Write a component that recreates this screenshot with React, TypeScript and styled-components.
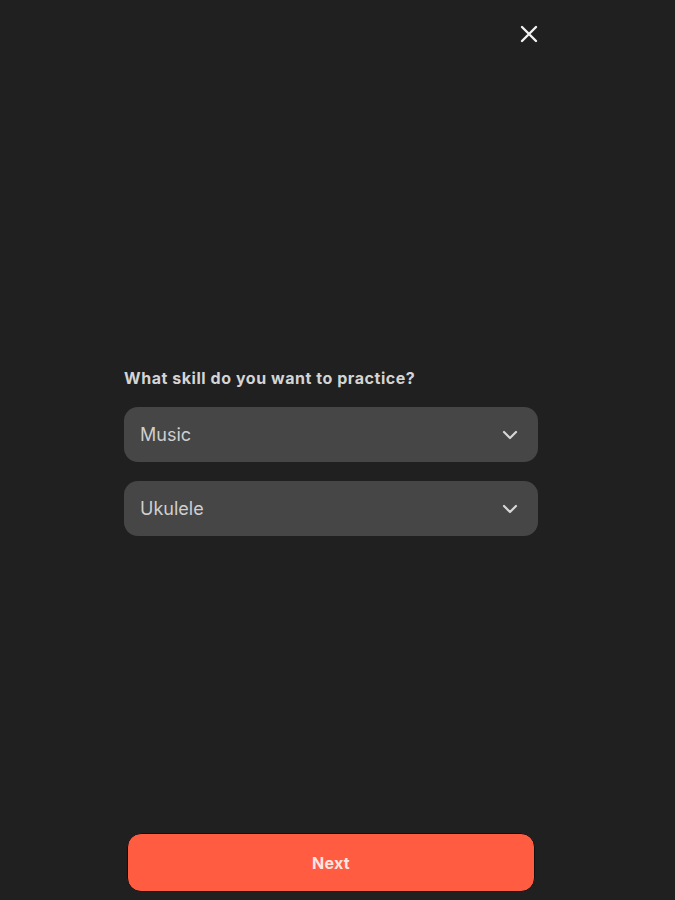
import React from 'react';
import styled, { createGlobalStyle } from 'styled-components';

const GlobalStyle = createGlobalStyle`
    html, body {
        margin: 0;
        padding: 0;
        background: #202020;
    }
    body {
        font-family: Inter, "Noto Sans", sans-serif;
        -webkit-font-smoothing: antialiased;
    }
`;

const Page = styled.div`
    height: 900px;
    width: 675px;
    display: flex;
    flex-direction: column;
    background: #202020;
    box-sizing: border-box;
`;

const Header = styled.div`
    display: flex;
    justify-content: flex-end;
    padding: 25px 137px 0 0;
    height: 68px;
    box-sizing: border-box;
`;

const CloseButton = styled.button`
    width: 18px;
    height: 18px;
    padding: 0;
    border: none;
    background: none;
    color: #f2f2f2;
    cursor: pointer;
    display: flex;
    align-items: center;
    justify-content: center;
`;

const Main = styled.main`
    flex: 1;
    display: flex;
    flex-direction: column;
    padding: 300px 0 0 124px;
    width: 414px;
`;

const Question = styled.label`
    font-size: 16px;
    font-weight: 700;
    color: #d4d4d4;
    line-height: 20px;
    margin-bottom: 19px;
    letter-spacing: 0.55px;
`;

const SelectList = styled.div`
    display: flex;
    flex-direction: column;
    gap: 19px;
`;

const Select = styled.div`
    height: 55px;
    border-radius: 14px;
    background: #464646;
    display: flex;
    align-items: center;
    justify-content: space-between;
    padding: 0 20px 0 16px;
    box-sizing: border-box;
    cursor: pointer;
`;

const SelectValue = styled.span`
    font-size: 18px;
    color: #cfcfcf;
`;

const Footer = styled.div`
    display: flex;
    padding: 0 0 8px 127px;
`;

const NextButton = styled.button`
    width: 408px;
    height: 59px;
    border-radius: 14px;
    border: 1px solid #111;
    background: #ff5c41;
    color: #fde6e0;
    font-family: Inter, "Noto Sans", sans-serif;
    font-size: 16px;
    font-weight: 700;
    letter-spacing: 0.3px;
    cursor: pointer;
`;

const Chevron = () => (
    <svg width="16" height="10" viewBox="0 0 16 10" fill="none">
        <path d="M2 2L8 8L14 2" stroke="#d6d6d6" strokeWidth="2.2" strokeLinecap="round" strokeLinejoin="round" />
    </svg>
);

const CloseIcon = () => (
    <svg width="18" height="18" viewBox="0 0 18 18" fill="none">
        <path d="M2 2L16 16M16 2L2 16" stroke="currentColor" strokeWidth="2.4" strokeLinecap="round" />
    </svg>
);

const options = ['Music', 'Ukulele'];

export default function App(): React.ReactElement {
    return (
        <>
            <GlobalStyle />
            <Page>
                <Header>
                    <CloseButton aria-label="Close">
                        <CloseIcon />
                    </CloseButton>
                </Header>
                <Main>
                    <Question>What skill do you want to practice?</Question>
                    <SelectList>
                        {options.map((value) => (
                            <Select key={value}>
                                <SelectValue>{value}</SelectValue>
                                <Chevron />
                            </Select>
                        ))}
                    </SelectList>
                </Main>
                <Footer>
                    <NextButton>Next</NextButton>
                </Footer>
            </Page>
        </>
    );
}
